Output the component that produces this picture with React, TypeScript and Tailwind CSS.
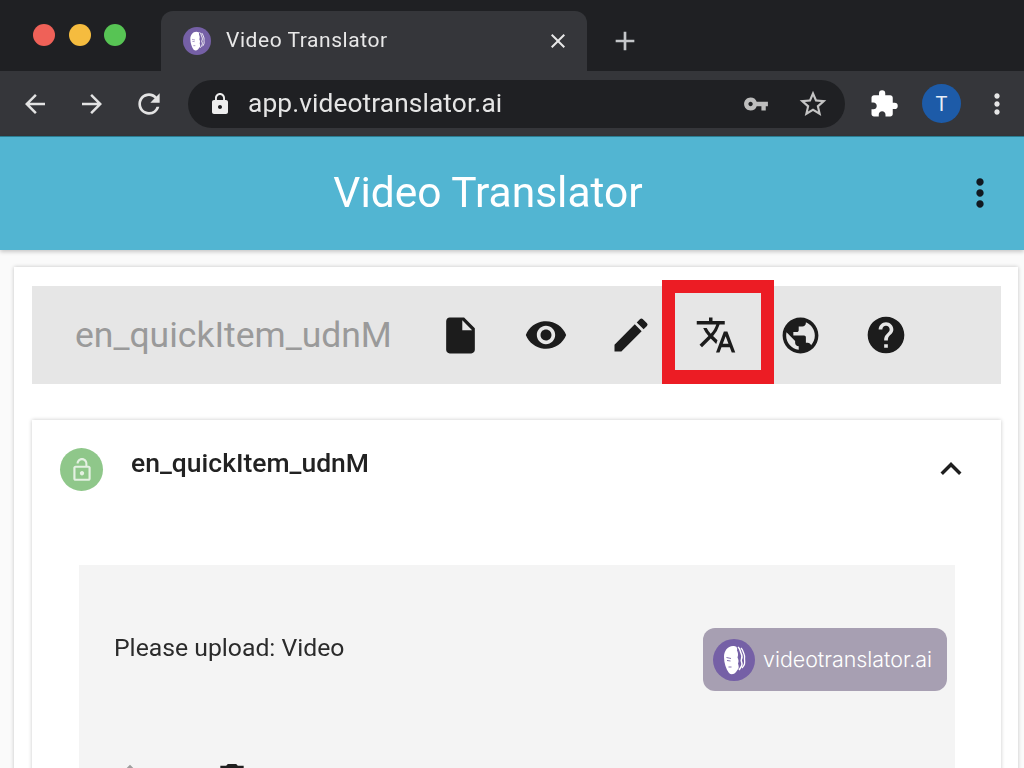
import {
  MdAdd,
  MdArrowBack,
  MdArrowForward,
  MdClose,
  MdDelete,
  MdEdit,
  MdExpandLess,
  MdExtension,
  MdFileUpload,
  MdHelp,
  MdInsertDriveFile,
  MdLock,
  MdLockOpen,
  MdMoreVert,
  MdPublic,
  MdRefresh,
  MdStarBorder,
  MdTranslate,
  MdVisibility,
  MdVpnKey,
} from 'react-icons/md'

function FaceLogo({ size }: { size: number }) {
  return (
    <svg width={size} height={size} viewBox="0 0 42 42" className="shrink-0">
      <circle cx="21" cy="21" r="21" fill="#7560a6" />
      <path d="M20 7C14.500 7 11 12 11 18c0 6 2 12 5 16 2 2 5 1.500 7-1l2.500-3.500c.5-2 0-3-.5-5 1-2 .5-4-.5-6 1-3 .5-5-.5-7 .5-1.500 0-3-1-4C22.500 7.500 21.500 7 20 7z" fill="#fff" />
      <path d="M25 8c2.500 2 2 4 3 6s1.500 4 .5 6 .5 3 .5 5-1.500 4-3 6" fill="none" stroke="#fff" strokeWidth="1.500" />
      <path d="M28 9c2 2 2 4 3 6s.5 4 .5 5 .5 3 0 5-1.500 3-2.500 4" fill="none" stroke="#fff" strokeWidth="1.300" />
      <path d="M13.500 18.500l4.500 1M14 21.500l3.500.5M15.500 28h3" stroke="#7560a6" strokeWidth="0.900" fill="none" />
    </svg>
  )
}

function AppToolIcon({ children }: { children: React.ReactNode }) {
  return <div className="flex w-[85px] justify-center text-[#1c1c1c]">{children}</div>
}

export default function App() {
  return (
    <div className="relative h-[768px] w-[1024px] overflow-hidden bg-[#fafafa] font-['Roboto',sans-serif]">
      <div className="blur-[0.7px]">
        {/* tab strip */}
        <div className="flex h-[71px] items-end bg-[#1f2023] pl-[161px]">
          <div className="flex h-[60px] w-[426px] items-center rounded-t-[12px] bg-[#35363a] pb-[1px] pl-[22px] pr-[17px] text-[#e8e8e8]">
            <FaceLogo size={28} />
            <span className="ml-[15px] flex-1 text-[21px] leading-none tracking-[0.55px]">Video Translator</span>
            <MdClose size={24} />
          </div>
          <MdAdd size={32} className="mb-[14px] ml-[22px] text-[#c4c6c9]" />
        </div>
        <div className="absolute left-[33px] top-[24px] flex gap-[13.5px]">
          <div className="h-[22px] w-[22px] rounded-full bg-[#ef6158]" />
          <div className="h-[22px] w-[22px] rounded-full bg-[#f5bc3f]" />
          <div className="h-[22px] w-[22px] rounded-full bg-[#57c454]" />
        </div>

        {/* toolbar */}
        <div className="flex h-[65px] items-center bg-[#35363a] pl-[20px] text-[#e3e3e3]">
          <MdArrowBack size={30} />
          <MdArrowForward size={30} className="ml-[27px]" />
          <MdRefresh size={32} className="ml-[26px]" />
          <div className="ml-[23px] flex h-[48px] w-[657px] items-center rounded-full bg-[#1f2023] pl-[20px] pr-[16px]">
            <MdLock size={24} className="text-[#eeeeee]" />
            <span className="ml-[16px] flex-1 text-[26.300px] leading-none tracking-[0.1px] text-[#e5e5e5]">app.videotranslator.ai</span>
            <MdVpnKey size={26} className="text-[#bdbdbd]" />
            <MdStarBorder size={32} className="ml-[28px] text-[#c4c4c4]" />
          </div>
          <MdExtension size={30} className="ml-[24px] text-white" />
          <div className="ml-[23px] flex h-[39px] w-[39px] items-center justify-center rounded-full bg-[#1d5ba8] text-[20px] text-[#e8eef7]">T</div>
          <MdMoreVert size={32} className="ml-[20px] text-[#e6e6e6]" />
        </div>

        {/* app header */}
        <div className="relative flex h-[114px] items-center justify-center border-t border-[#2b7d92] bg-[#52b5d2] pb-[1px] pr-[48px] shadow-[0_2px_4px_rgba(0,0,0,0.2)]">
          <h1 className="text-[42.5px] font-normal leading-none text-white">Video Translator</h1>
          <MdMoreVert size={44} className="absolute right-[22px] top-[34px] text-[#111820]" />
        </div>

        {/* outer card */}
        <div className="ml-[14px] mr-[6px] mt-[17px] h-[520px] bg-white pl-[18px] pr-[17px] pt-[19px] shadow-[0_0_4px_rgba(0,0,0,0.22)]">
          <div className="relative flex h-[98px] items-center bg-[#e6e6e6] pl-[43px]">
            <span className="mt-[2px] w-[343px] text-[35.5px] leading-none text-[#9a9a9a]">en_quickItem_udnM</span>
            <AppToolIcon><MdInsertDriveFile size={43} /></AppToolIcon>
            <AppToolIcon><MdVisibility size={44} /></AppToolIcon>
            <AppToolIcon><MdEdit size={44} /></AppToolIcon>
            <AppToolIcon><MdTranslate size={42} /></AppToolIcon>
            <AppToolIcon><MdPublic size={43} /></AppToolIcon>
            <AppToolIcon><MdHelp size={44} /></AppToolIcon>
            <div className="absolute left-[630px] top-[-6px] h-[104px] w-[112px] border-[13px] border-b-[14px] border-[#ec1c24]" />
          </div>

          {/* inner card */}
          <div className="mt-[36px] h-[400px] bg-white px-[47px] shadow-[0_0_4px_rgba(0,0,0,0.22)]">
            <div className="flex h-[145px] items-start">
              <div className="ml-[-19px] mt-[28px] flex h-[43px] w-[43px] items-center justify-center rounded-full bg-[#8fc78a] text-[#e4f1e2]">
                <MdLockOpen size={26} />
              </div>
              <span className="ml-[28px] mt-[26px] flex-1 text-[26.500px] font-medium leading-[34px] text-[#222222]">en_quickItem_udnM</span>
              <MdExpandLess size={42} className="mr-[-18px] mt-[28px] text-[#1f1f1f]" />
            </div>
            <div className="h-[260px] w-[876px] bg-[#f4f4f4] pl-[35px] pt-[67px]">
              <p className="text-[24.750px] leading-[32px] text-[#2b2b2b]">Please upload: Video</p>
              <div className="ml-[-3px] mt-[95px] flex items-center">
                <MdFileUpload size={38} className="text-[#9e9e9e]" />
                <MdDelete size={40} className="ml-[63px] text-[#1f1f1f]" />
              </div>
            </div>
          </div>
        </div>
      </div>

      {/* watermark */}
      <div className="absolute left-[703px] top-[628px] flex h-[63px] w-[244px] items-center rounded-[12px] bg-[#a79fb2] pl-[10px]">
        <FaceLogo size={42} />
        <span className="ml-[8px] font-['Inter',sans-serif] text-[21.400px] font-light leading-none text-white">videotranslator.ai</span>
      </div>
    </div>
  )
}
